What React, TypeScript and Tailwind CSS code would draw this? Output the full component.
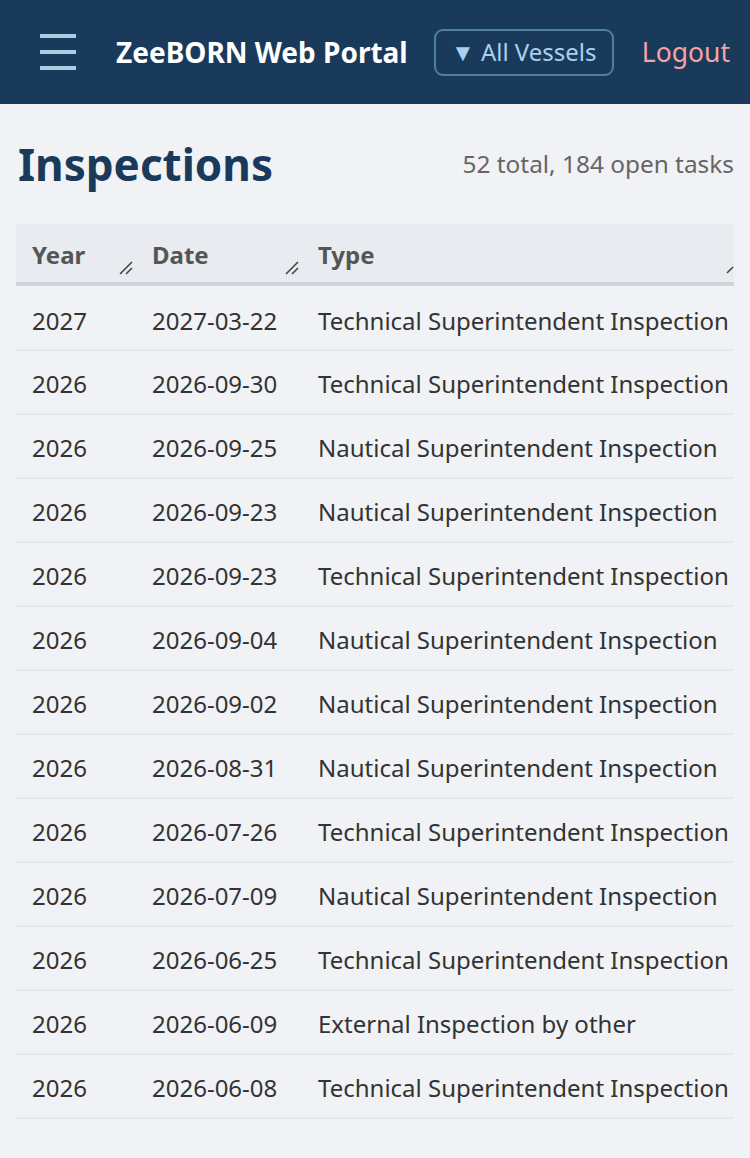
import React from "react";

const rows: [string, string, string][] = [
  ["2027", "2027-03-22", "Technical Superintendent Inspection"],
  ["2026", "2026-09-30", "Technical Superintendent Inspection"],
  ["2026", "2026-09-25", "Nautical Superintendent Inspection"],
  ["2026", "2026-09-23", "Nautical Superintendent Inspection"],
  ["2026", "2026-09-23", "Technical Superintendent Inspection"],
  ["2026", "2026-09-04", "Nautical Superintendent Inspection"],
  ["2026", "2026-09-02", "Nautical Superintendent Inspection"],
  ["2026", "2026-08-31", "Nautical Superintendent Inspection"],
  ["2026", "2026-07-26", "Technical Superintendent Inspection"],
  ["2026", "2026-07-09", "Nautical Superintendent Inspection"],
  ["2026", "2026-06-25", "Technical Superintendent Inspection"],
  ["2026", "2026-06-09", "External Inspection by other"],
  ["2026", "2026-06-08", "Technical Superintendent Inspection"],
];

function Grip() {
  return (
    <svg
      className="absolute right-[2px] bottom-[6px]"
      width="16"
      height="16"
      viewBox="0 0 16 16"
    >
      <line x1="2" y1="14" x2="14" y2="2" stroke="#444" strokeWidth="1.6" />
      <line x1="8" y1="14" x2="14" y2="8" stroke="#444" strokeWidth="1.6" />
    </svg>
  );
}

export default function App() {
  const font = { fontFamily: '"Noto Sans", "Open Sans", sans-serif' };
  return (
    <div className="min-h-[1158px] bg-[#f0f2f5]" style={font}>
      <header className="h-[104px] bg-[#1a3a5c] flex items-center pl-[40px] pr-[20px]">
        <div className="flex flex-col gap-[12px] w-[36px]">
          <div className="h-[4px] bg-[#a9cde2]" />
          <div className="h-[4px] bg-[#a9cde2]" />
          <div className="h-[4px] bg-[#a9cde2]" />
        </div>
        <div className="ml-[40px] text-white font-bold text-[28px] leading-none">
          ZeeBORN Web Portal
        </div>
        <div className="ml-[26px] h-[47px] w-[180px] border-2 border-[#4f7fa3] rounded-[9px] flex items-center justify-center text-[#a9d1ec] text-[24px] leading-none">
          ▼ All Vessels
        </div>
        <div className="ml-auto text-[#f5a3a3] text-[26.5px] leading-none">Logout</div>
      </header>

      <main className="px-[16px]">
        <div className="flex items-center justify-between h-[120px]">
          <h1 className="text-[44px] font-bold text-[#1a3a5c] leading-none pl-[2px]">
            Inspections
          </h1>
          <div className="text-[24.4px] text-[#666] leading-none">52 total, 184 open tasks</div>
        </div>

        <table className="w-full border-collapse text-[24px]">
          <thead>
            <tr className="bg-[#e8ebef] border-b-4 border-[#d1d5db]">
              <th className="relative text-left font-bold text-[#555] h-[60px] pl-[16px] pt-[4px] w-[120px]">
                Year
                <Grip />
              </th>
              <th className="relative text-left font-bold text-[#555] h-[60px] pl-[16px] pt-[4px] w-[166px]">
                Date
                <Grip />
              </th>
              <th className="relative text-left font-bold text-[#555] h-[60px] pl-[16px] pt-[4px]">
                Type
                <svg className="absolute right-0 bottom-[8px]" width="8" height="8" viewBox="0 0 8 8">
                  <line x1="1" y1="7" x2="7" y2="1" stroke="#444" strokeWidth="1.6" />
                </svg>
              </th>
            </tr>
          </thead>
          <tbody>
            {rows.map((r, i) => (
              <tr key={i} className="border-b-2 border-[#e4e7eb]">
                <td className={`${i === 0 ? "h-[66px] pt-[6px]" : "h-[64px] pt-[3px]"} pl-[16px] text-[#333]`}>{r[0]}</td>
                <td className={`${i === 0 ? "h-[66px] pt-[6px]" : "h-[64px] pt-[3px]"} pl-[16px] text-[#333] whitespace-nowrap`}>{r[1]}</td>
                <td className={`${i === 0 ? "h-[66px] pt-[6px]" : "h-[64px] pt-[3px]"} pl-[16px] text-[#333] whitespace-nowrap`}>{r[2]}</td>
              </tr>
            ))}
          </tbody>
        </table>
      </main>
    </div>
  );
}
